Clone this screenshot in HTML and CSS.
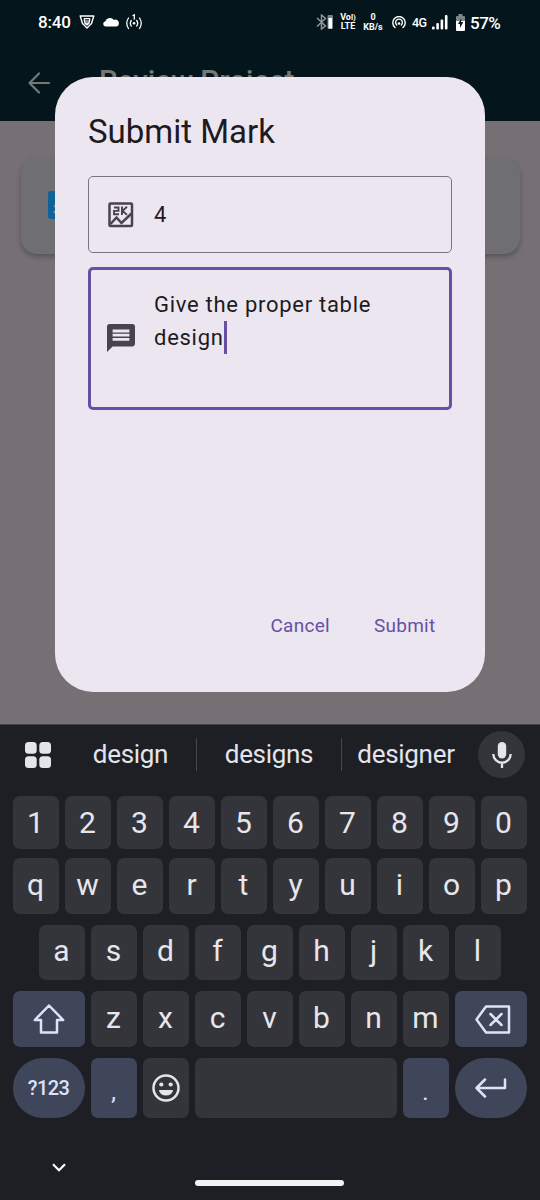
FILE: index.html
```html
<!DOCTYPE html>
<html lang="en">
<head>
<meta charset="utf-8">
<title>Review Project</title>
<link rel="stylesheet" href="styles.css">
</head>
<body>
<div class="phone">
  <header class="top">
    <div class="status">
      <span class="clock">8:40</span>
      <svg class="s-shield" width="16" height="14" viewBox="0 0 16 14" fill="none" stroke="#fff" stroke-width="1.4" stroke-linejoin="round"><path d="M1.2 1h13.6L12.500 8.500 8 13 3.500 8.500z"/><path d="M5 3.600h6M5.500 6h5M6 8.200h4M5 3.600l1 5L8 10l2-1.800 1-4.600" stroke-width="1.200"/></svg>
      <svg class="s-cloud" width="16" height="10" viewBox="0 0 16 10" fill="#fff"><path d="M2.500 9.500a2.700 2.700 0 0 1-.2-5.300A5 5 0 0 1 11 3a3.300 3.300 0 0 1 4.800 3.500 3 3 0 0 1-2.800 3z"/></svg>
      <svg class="s-cast" width="18" height="16" viewBox="0 0 18 16" fill="none" stroke="#fff" stroke-width="1.300"><path d="M3.500 4q-3.500 5 0 10.500M6.300 6.500q-2 2.800 0 5.500M14.500 4q3.500 5 0 10.500M11.700 6.500q2 2.800 0 5.500M8 1.500 9.300.8v4.400" stroke-linecap="round"/><circle cx="9" cy="9.300" r="1.300" fill="#fff" stroke="none"/></svg>
      <svg class="s-bt" width="18" height="16" viewBox="0 0 18 16" fill="none" stroke="#8b9496" stroke-width="1.500"><path d="M1 4 9.500 12 5.500 15V1l4 3.500L1 12.500"/><rect x="11.500" y="1" width="5.500" height="14" rx="1" fill="#788285" stroke="none"/><rect x="12.500" y="4" width="3.500" height="10.500" fill="#fff" stroke="none"/></svg>
      <span class="stack volte"><b>Vo<i>l)</i></b><b>LTE</b></span>
      <span class="stack rate"><b>0</b><b>KB/s</b></span>
      <svg class="s-hot" width="14" height="13" viewBox="0 0 14 13" fill="none" stroke="#fff" stroke-width="1.400" stroke-linecap="round"><path d="M3 11.500A6.200 6.200 0 1 1 11 11.500M4.700 9A3.400 3.400 0 1 1 9.300 9"/><circle cx="7" cy="7.500" r="1.300" fill="#fff" stroke="none"/></svg>
      <span class="net">4G</span>
      <svg class="s-sig" width="16" height="15" viewBox="0 0 16 15" fill="#fff"><rect y="11.500" width="2.600" height="3" rx="1"/><rect x="4.300" y="8" width="2.600" height="6.500" rx="1"/><rect x="8.600" y="4.500" width="2.600" height="10" rx="1"/><rect x="12.900" width="2.600" height="14.500" rx="1"/></svg>
      <svg class="s-bat" width="9" height="17" viewBox="0 0 9 17"><path d="M2.500 0h4v2H8a1 1 0 0 1 1 1v6H0V3a1 1 0 0 1 1-1h1.500z" fill="#7d8588"/><path d="M0 7h9v9a1 1 0 0 1-1 1H1a1 1 0 0 1-1-1z" fill="#fff"/><path d="M5.500 4 2 10h2v4l3.300-6H5z" fill="#04151c"/></svg>
      <span class="pct">57%</span>
    </div>
    <div class="appbar">
      <svg width="22" height="22" viewBox="0 0 22 22" fill="none" stroke="#747978" stroke-width="2.200" stroke-linecap="round" stroke-linejoin="round"><path d="M21 11H1.500M11 1.500 1.500 11l9.500 9.500"/></svg>
      <span class="page-title">Review Project</span>
    </div>
  </header>
  <main class="page">
    <div class="card"><svg width="28" height="28" viewBox="0 0 28 28"><rect width="28" height="28" rx="3" fill="#116199"/><circle cx="7" cy="15" r="1.300" fill="#82919e"/><path d="M5 22q1-3 4-3v3z" fill="#82919e"/></svg></div>
  </main>

  <section class="dialog">
    <h1>Submit Mark</h1>
    <div class="field mark">
      <svg width="26" height="26" viewBox="0 0 26 26" fill="none" stroke="#49434f" stroke-width="2.500" stroke-linejoin="round"><rect x="1.500" y="1.500" width="22.500" height="22.500" rx="1"/><path d="M2.500 22 8.500 15.500 13.500 21 23.500 11.500" stroke-linejoin="miter"/><path d="M6 5.500h4.500v3.400H6v3.400h5M14 4.500v8.500M19 4.800l-4.500 4 4.500 4.100" stroke-width="1.900" stroke-linejoin="miter"/></svg>
      <span>4</span>
    </div>
    <div class="field note">
      <svg width="28" height="28" viewBox="2 2 20 20" fill="#49434f"><path d="M20 2H4a2 2 0 0 0-2 2v18l4-4h14a2 2 0 0 0 2-2V4a2 2 0 0 0-2-2zm-2 12H6v-2h12zm0-3H6V9h12zm0-3H6V6h12z"/></svg>
      <p>Give the proper table<br><span class="typed">design</span></p>
    </div>
    <div class="actions"><span class="cancel">Cancel</span><span class="submit">Submit</span></div>
  </section>

  <section class="keyboard">
    <div class="suggest">
      <svg width="26" height="26" viewBox="0 0 26 26" fill="#e3e4ec"><rect width="11.700" height="11.700" rx="3.500"/><rect x="14.300" width="11.700" height="11.700" rx="3.500"/><rect y="14.300" width="11.700" height="11.700" rx="3.500"/><rect x="14.300" y="14.300" width="11.700" height="11.700" rx="3.500"/></svg>
      <span class="w1">design</span><span class="w2">designs</span><span class="w3">designer</span>
      <div class="mic"><svg width="20" height="28" viewBox="0 0 20 28" fill="none" stroke="#e3e4ec" stroke-width="2.300"><rect x="5.800" y="1" width="8.400" height="16.500" rx="4.200" fill="#e3e4ec" stroke="none"/><path d="M1.300 13a8.700 8.700 0 0 0 17.400 0M10 22v5"/></svg></div>
    </div>
    <div class="row nums"><span>1</span><span>2</span><span>3</span><span>4</span><span>5</span><span>6</span><span>7</span><span>8</span><span>9</span><span>0</span></div>
    <div class="row"><span>q</span><span>w</span><span>e</span><span>r</span><span>t</span><span>y</span><span>u</span><span>i</span><span>o</span><span>p</span></div>
    <div class="row home"><span>a</span><span>s</span><span>d</span><span>f</span><span>g</span><span>h</span><span>j</span><span>k</span><span>l</span></div>
    <div class="row lower">
      <span class="wide blue"><svg width="32" height="30" viewBox="0 0 32 30" fill="none" stroke="#dde2f9" stroke-width="2.500" stroke-linejoin="round"><path d="M16 1.500 1.800 16H8v12.500h16V16h6.200z"/></svg></span>
      <span>z</span><span>x</span><span>c</span><span>v</span><span>b</span><span>n</span><span>m</span>
      <span class="wide blue"><svg class="del" width="36" height="29" viewBox="0 0 36 29" fill="none" stroke="#dde2f9" stroke-width="2.500" stroke-linejoin="round"><path d="M11 1.500h23v26H11l-9.500-13zM15.500 9l11 11M26.500 9l-11 11" stroke-linecap="round"/></svg></span>
    </div>
    <div class="row bottom">
      <span class="wide blue pill sym">?123</span><span class="blue punct">,</span>
      <span><svg width="28" height="28" viewBox="0 0 28 28"><circle cx="14" cy="14" r="12.500" fill="none" stroke="#e3e4ec" stroke-width="2.500"/><circle cx="9.300" cy="10.500" r="2.100" fill="#e3e4ec"/><circle cx="18.700" cy="10.500" r="2.100" fill="#e3e4ec"/><path d="M7 16h14a7 5.500 0 0 1-14 0z" fill="#e3e4ec"/></svg></span>
      <span class="space"></span><span class="blue punct">.</span>
      <span class="wide blue pill"><svg width="32" height="20" viewBox="0 0 32 20" fill="none" stroke="#dde2f9" stroke-width="2.500" stroke-linecap="round" stroke-linejoin="round"><path d="M30 1.500V10H1.500M10 1.500 1.500 10l8.500 8.500"/></svg></span>
    </div>
    <div class="nav">
      <svg width="14" height="9" viewBox="0 0 14 9" fill="none" stroke="#fff" stroke-width="2.200"><path d="M1 1.200 7 7.200l6-6"/></svg>
      <div class="handle"></div>
    </div>
  </section>
</div>
</body>
</html>
```
FILE: styles.css
```css
* { box-sizing: border-box; }
body { margin: 0; font-family: Roboto, sans-serif; }
svg { display: block; flex: none; }
.phone { position: relative; width: 540px; height: 1200px; overflow: hidden; display: flex; flex-direction: column; background: #767074; }

.top { height: 121px; background: #04151c; }
.status { height: 44px; padding-left: 38px; display: flex; align-items: center; color: #fff; }
.clock { width: 41px; font-size: 17px; font-weight: 500; letter-spacing: -0.2px; }
.s-cloud { margin-left: 8px; }
.s-cast { margin-left: 6px; }
.s-bt { margin-left: 173px; }
.stack { display: flex; flex-direction: column; align-items: center; font-size: 9px; line-height: 9px; }
.stack b { font-weight: 700; white-space: nowrap; }
.stack i { font-style: normal; font-size: 8px; }
.volte { width: 16px; margin-left: 6px; }
.rate { width: 22px; margin-left: 6px; line-height: 10px; }
.s-hot { margin-left: 8px; }
.net { width: 15px; margin-left: 6px; font-size: 12.5px; font-weight: 500; letter-spacing: -0.5px; }
.s-sig { margin-left: 5px; }
.s-bat { margin-left: 8px; }
.pct { margin-left: 5px; padding-top: 1px; font-size: 17px; font-weight: 500; letter-spacing: -0.5px; }
.appbar { height: 77px; padding-left: 28px; display: flex; align-items: center; }
.page-title { margin: -3px 0 0 49px; font-size: 29.5px; font-weight: 500; color: #747978; white-space: nowrap; }

.page { height: 603px; padding: 36px 20px 0 21px; }
.card { height: 97px; padding: 34px 0 0 27px; border-radius: 16px; background: #6f6e72; box-shadow: 0 3px 5px rgba(0,0,0,.25); }

.dialog { position: absolute; left: 55px; top: 77px; width: 430px; height: 614.5px; border-radius: 38px; background: #ece6f0; padding: 33px 33px 0; display: flex; flex-direction: column; color: #1d1b20; }
h1 { margin: 0 0 23px; font-size: 33px; line-height: 43px; font-weight: 400; white-space: nowrap; }
.field { border-radius: 5px; display: flex; align-items: center; font-size: 22px; letter-spacing: .72px; line-height: 33px; }
.mark { height: 77px; border: 1px solid #79747e; padding-left: 19px; gap: 20px; }
.mark span { margin-top: -1px; }
.note { height: 143px; margin-top: 14px; border: 3px solid #6750a4; padding-left: 16px; gap: 19px; }
.note svg { margin-top: -2px; }
.note p { margin: -2px 0 0; height: 99px; white-space: nowrap; }
.typed { display: inline-block; height: 33px; border-right: 3px solid #6750a4; }
.actions { display: flex; margin-top: 204px; padding-left: 182.5px; font-size: 19px; line-height: 24px; letter-spacing: .25px; color: #6750a4; }
.cancel { width: 103.5px; }

.keyboard { height: 476px; background: #1e1f24; border-top: 1px solid #45444a; }
.suggest { height: 59px; margin-bottom: 12px; padding: 0 15px 0 25px; display: flex; align-items: center; color: #e3e4ec; font-size: 26px; }
.suggest > span { height: 33px; line-height: 33px; text-align: center; letter-spacing: -.3px; }
.w1 { width: 146px; padding-left: 14px; border-right: 1px solid #46474c; }
.w2 { width: 145px; border-right: 1px solid #46474c; }
.w3 { width: 128px; }
.mic { width: 47px; height: 47px; margin-left: 8px; border-radius: 50%; background: #34353a; display: flex; align-items: center; justify-content: center; }
.row { display: flex; gap: 6px; height: 55.5px; padding: 0 12.5px; margin-bottom: 11.2px; }
.row > span { width: 46px; flex: none; border-radius: 7px; background: #34353a; color: #e6e6ec; font-size: 30px; line-height: 53px; display: flex; justify-content: center; align-items: center; padding-bottom: 3px; }
.nums { height: 52.5px; margin-bottom: 9.5px; }
.row.nums > span { padding-bottom: 0; }
.home { padding-left: 38.5px; }
.row > .wide { width: 72px; padding-bottom: 0; }
.row > .blue { background: #40465a; color: #dde2f9; }
.row > .wide:last-child { width: 72.500px; }
.del { margin-left: 4px; }
.row.bottom { height: 60px; margin: 0; }
.row.bottom > span { padding-bottom: 0; }
.row > .pill { border-radius: 30px; }
.row > .sym { font-size: 20px; font-weight: 500; letter-spacing: -.6px; }
.row.bottom > .punct { font-size: 24px; padding-top: 9px; }
.row > .space { width: 202px; }
.nav { height: 82px; padding: 45px 0 0 52px; display: flex; }
.handle { width: 149px; height: 6px; margin: 17px 0 0 129px; border-radius: 3px; background: #f2f2f2; }
```
